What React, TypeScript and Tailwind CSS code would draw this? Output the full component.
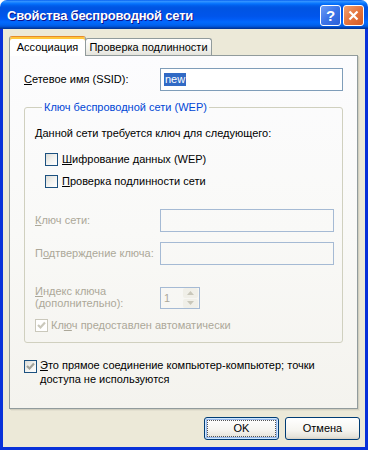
import React from "react";

const FONT = { fontFamily: '"Liberation Sans", Arial, sans-serif' };

function U({ children }: { children: React.ReactNode }) {
  return <span className="underline underline-offset-[1px]">{children}</span>;
}

function CheckBox({ checked = false, disabled = false }: { checked?: boolean; disabled?: boolean }) {
  return (
    <span
      className={`flex h-[13px] w-[13px] shrink-0 items-center justify-center border ${
        disabled
          ? "border-[#cac8bb] bg-white"
          : "border-[#1c5180] bg-[linear-gradient(135deg,#dcdcd7_0%,#f2f2ef_50%,#ffffff_100%)]"
      }`}
    >
      {checked && (
        <svg width="9" height="9" viewBox="0 0 9 9">
          <path
            d="M1 4 L3.5 6.5 L8 1.5"
            fill="none"
            stroke={disabled ? "#cac8bb" : "#a3a39a"}
            strokeWidth="2.2"
          />
        </svg>
      )}
    </span>
  );
}

function Edit({ width, disabled = false, children }: { width: string; disabled?: boolean; children?: React.ReactNode }) {
  return (
    <div
      className={`flex h-[23px] ${width} shrink-0 items-center border px-[2px] ${
        disabled ? "border-[#a5bad4] bg-transparent" : "border-[#7f9db9] bg-white"
      }`}
    >
      {children}
    </div>
  );
}

function XPButton({ label, isDefault = false }: { label: string; isDefault?: boolean }) {
  return (
    <button
      type="button"
      className={`flex h-[23px] w-[75px] items-center justify-center rounded-[3px] border border-[#003c74] bg-[linear-gradient(180deg,#ffffff_0%,#f5f4ef_60%,#e6e3da_90%,#d6d0c5_100%)] text-[11px] text-black ${
        isDefault ? "shadow-[inset_0_0_0_1px_#cee7ff,inset_0_0_0_2px_#98b8ea]" : ""
      }`}
    >
      <span
        className={`flex h-[15px] w-[67px] items-center justify-center ${
          isDefault ? "outline outline-1 outline-dotted outline-[#555]" : ""
        }`}
      >
        {label}
      </span>
    </button>
  );
}

export default function App() {
  return (
    <div className="flex h-[450px] w-[368px] flex-col text-[11px] leading-[13px] text-black" style={FONT}>
      {/* title bar */}
      <div className="flex h-[29px] shrink-0 items-center rounded-t-[7px] bg-[linear-gradient(180deg,#0058ee_0%,#3593ff_4%,#288eff_7%,#127dff_10%,#036ffc_14%,#0262ee_18%,#0057e5_24%,#0054e3_30%,#0055eb_56%,#005bf5_66%,#026afe_76%,#0062ef_86%,#0052d6_92%,#0040ab_96%,#003092_100%)] pl-[7px] pr-[4px]">
        <span className="flex-1 pt-[2px] text-[13px] font-bold tracking-[-0.2px] text-white [text-shadow:1px_1px_0_#0f1089]">
          Свойства беспроводной сети
        </span>
        <div className="flex gap-[2px] pt-[2px]">
          <div className="flex h-[21px] w-[21px] items-center justify-center rounded-[3px] border border-white bg-[linear-gradient(135deg,#6d9cf5_0%,#3b74e8_50%,#2a5fd8_100%)] text-[15px] font-bold text-white">
            ?
          </div>
          <div className="flex h-[21px] w-[21px] items-center justify-center rounded-[3px] border border-white bg-[linear-gradient(135deg,#f0a070_0%,#e5753e_50%,#d45b26_100%)]">
            <svg width="11" height="11" viewBox="0 0 11 11">
              <path d="M1.5 1.5 L9.5 9.5 M9.5 1.5 L1.5 9.5" stroke="white" strokeWidth="2.2" />
            </svg>
          </div>
        </div>
      </div>

      {/* window body */}
      <div className="flex flex-1 border-x-[3px] border-b-[3px] border-[#0831d9]">
        <div className="flex flex-1 flex-col bg-[#ece9d8] pl-[6px] pr-[5px] pt-[7px]">
          {/* tabs */}
          <div className="flex h-[19px] items-end">
            <div className="relative z-10 mb-[-1px] flex h-[20px] w-[77px] items-center justify-center rounded-t-[3px] border-x border-t border-x-[#919b9c] border-t-[#e68b2c] bg-white shadow-[inset_0_2px_0_#ffc73c]">
              <span className="mt-[1px]">Ассоциация</span>
            </div>
            <div className="ml-[-1px] flex h-[17px] w-[127px] items-center justify-center rounded-t-[3px] border-x border-t border-[#919b9c] bg-[linear-gradient(180deg,#ffffff_0%,#f3f3ef_60%,#e4e3dc_100%)]">
              Проверка подлинности
            </div>
          </div>

          {/* tab panel */}
          <div className="flex h-[354px] w-[349px] flex-col border border-[#919b9c] bg-[linear-gradient(180deg,#fcfcfe_0%,#f9f9f7_50%,#f4f3ee_100%)] pl-[14px] shadow-[1px_1px_0_#d0cebf,2px_2px_0_#e3e0d0]">
            <div className="mt-[12px] flex items-center">
              <span className="w-[136px]">
                <U>С</U>етевое имя (SSID):
              </span>
              <Edit width="w-[183px]">
                <span className="ml-[1px] bg-[#316ac5] px-[1px] text-white">new</span>
              </Edit>
            </div>

            <fieldset className="mt-[10px] w-[319px] rounded-[3px] border border-[#d0d0bf] pb-[10px] pl-[10px]">
              <legend className="ml-[7px] px-[2px] text-[#0046d5]">Ключ беспроводной сети (WEP)</legend>

              <div className="mt-[13px]">Данной сети требуется ключ для следующего:</div>

              <div className="ml-[10px] mt-[13px] flex items-center gap-[4px]">
                <CheckBox />
                <span>
                  <U>Ш</U>ифрование данных (WEP)
                </span>
              </div>
              <div className="ml-[10px] mt-[9px] flex items-center gap-[4px]">
                <CheckBox />
                <span>
                  <U>П</U>роверка подлинности сети
                </span>
              </div>

              <div className="mt-[21px] flex items-center text-[#aca899]">
                <span className="w-[125px]">
                  <U>К</U>люч сети:
                </span>
                <Edit width="w-[174px]" disabled />
              </div>
              <div className="mt-[10px] flex items-center text-[#aca899]">
                <span className="w-[125px]">
                  П<U>о</U>дтверждение ключа:
                </span>
                <Edit width="w-[174px]" disabled />
              </div>

              <div className="mt-[20px] flex items-start text-[#aca899]">
                <span className="w-[125px] leading-[12px]">
                  <U>И</U>ндекс ключа
                  <br />
                  (дополнительно):
                </span>
                <div className="mt-[2px] flex h-[22px] w-[40px] items-center border border-[#a5bad4] pl-[3px]">
                  <span className="flex-1">1</span>
                  <div className="flex h-[20px] w-[16px] flex-col gap-[1px] pr-[1px]">
                    <div className="flex flex-1 items-center justify-center rounded-[2px] bg-[#f0efe8]">
                      <svg width="7" height="4" viewBox="0 0 7 4">
                        <path d="M0 4 L3.5 0 L7 4 Z" fill="#c9c7ba" />
                      </svg>
                    </div>
                    <div className="flex flex-1 items-center justify-center rounded-[2px] bg-[#f0efe8]">
                      <svg width="7" height="4" viewBox="0 0 7 4">
                        <path d="M0 0 L3.5 4 L7 0 Z" fill="#c9c7ba" />
                      </svg>
                    </div>
                  </div>
                </div>
              </div>

              <div className="mt-[10px] flex items-center gap-[3px] text-[#aca899]">
                <CheckBox checked disabled />
                <span>
                  Кл<U>ю</U>ч предоставлен автоматически
                </span>
              </div>
            </fieldset>

            <div className="mt-[15px] flex items-start gap-[3px]">
              <div className="mt-[2px]">
                <CheckBox checked />
              </div>
              <span className="leading-[14px]">
                <U>Э</U>то прямое соединение компьютер-компьютер; точки
                <br />
                доступа не используются
              </span>
            </div>
          </div>

          {/* buttons */}
          <div className="mt-[8px] flex justify-end gap-[6px]">
            <XPButton label="OK" isDefault />
            <XPButton label="Отмена" />
          </div>
        </div>
      </div>
    </div>
  );
}
